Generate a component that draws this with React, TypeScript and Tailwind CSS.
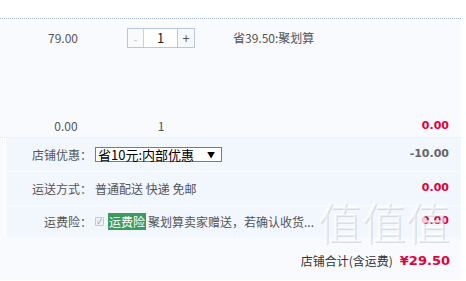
import React from 'react';

const Label: React.FC<{ children: React.ReactNode }> = ({ children }) => (
  <div className="w-[86px] shrink-0 text-right text-[#555]">{children}</div>
);

export default function App() {
  return (
    <div className="relative w-[466px] h-[281px] overflow-hidden bg-white font-['Noto_Sans_CJK_SC',sans-serif] text-[12px] text-[#444]">
      <div className="h-[18px]" />
      <div className="w-[461px] bg-[#f8fafe]">
        {/* item row */}
        <div className="flex h-[119px] flex-col justify-between border-t border-dotted border-[#a3b5ca] pt-[9px] pb-[2px]">
          <div className="flex items-center">
            <div className="w-[127px] pr-[1px] text-center text-[#555]">79.00</div>
            <div className="flex h-[20px] w-[68px] border border-[#b8c8da] bg-white">
              <div className="flex w-[16px] items-center justify-center border-r border-[#c6d3e1] bg-[#f8fafc] text-[10px] text-[#bbb]">-</div>
              <div className="flex flex-1 items-center justify-center text-[13px] text-[#222]">1</div>
              <div className="flex w-[17px] items-center justify-center border-l border-[#b8c8da] bg-[#f6f9fc] text-[13px] text-[#555]">+</div>
            </div>
            <div className="ml-[38px] text-[#555]">省39.50:聚划算</div>
          </div>
          <div className="flex items-center">
            <div className="w-[132px] text-center text-[#555]">0.00</div>
            <div className="w-[58px] text-center text-[#555]">1</div>
            <div className="flex-1 pr-[12px] text-right font-['DejaVu_Sans',sans-serif] text-[11px] font-bold text-[#e3003b]">0.00</div>
          </div>
        </div>

        {/* shop options */}
        <div className="border-t border-dotted border-[#dfe6ef] pl-[5px]">
          <div className="border-l border-white bg-[#f2f6fd]">
            <div className="flex h-[34px] items-center border-b border-[#fbfcff]">
              <Label>店铺优惠：</Label>
              <div className="ml-[3px] flex h-[15px] w-[127px] items-center justify-between border border-[#7a7a7a] bg-white pl-[2px] pr-[6px] text-[13px] leading-none text-black">
                <span>省10元:内部优惠</span>
                <span className="text-[8px]">▼</span>
              </div>
              <div className="flex-1 pr-[12px] text-right font-['DejaVu_Sans',sans-serif] text-[11px] font-bold text-[#666]">-10.00</div>
            </div>
            <div className="flex h-[34px] items-center border-b border-[#fbfcff]">
              <Label>运送方式：</Label>
              <div className="ml-[3px] text-[#555]">普通配送 快递 免邮</div>
              <div className="flex-1 pr-[12px] text-right font-['DejaVu_Sans',sans-serif] text-[11px] font-bold text-[#e3003b]">0.00</div>
            </div>
            <div className="flex h-[31px] items-center">
              <Label>运费险：</Label>
              <div className="ml-[3px] flex h-[9px] w-[9px] items-center justify-center rounded-[1px] border border-[#c4c9cf] bg-[#eef0f2] text-[7px] leading-none text-[#8a9099]">✓</div>
              <div className="ml-[4px] bg-[#3d9b5f] px-[1px] leading-[17px] text-white">运费险</div>
              <div className="ml-[2px] text-[#555]">聚划算卖家赠送，若确认收货...</div>
              <div className="flex-1 pr-[12px] text-right font-['DejaVu_Sans',sans-serif] text-[11px] font-bold text-[#e3003b]">0.00</div>
            </div>
          </div>
        </div>

        {/* total */}
        <div className="flex h-[43px] items-end justify-end pb-[10px] pr-[11px]">
          <span className="text-[#333]">店铺合计(含运费)</span>
          <span className="ml-[7px] font-['DejaVu_Sans',sans-serif] text-[13px] font-bold text-[#e3003b]">¥29.50</span>
        </div>
      </div>

      {/* watermark */}
      <div className="pointer-events-none absolute left-[318px] top-[199px] flex font-['Noto_Sans_CJK_SC',sans-serif] text-[44px] font-light leading-none text-white/50 [text-shadow:1px_1px_0_rgba(160,165,175,0.35),-1px_-1px_0_rgba(255,255,255,0.6)]">
        <span>值</span>
        <span>值</span>
        <span>值</span>
      </div>
    </div>
  );
}
